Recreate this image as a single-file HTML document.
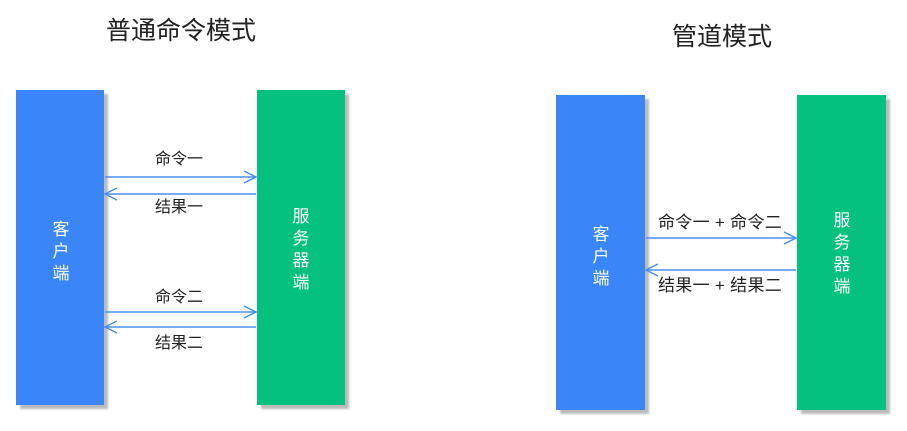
<!DOCTYPE html>
<html><head><meta charset="utf-8"><style>
body{margin:0;width:907px;height:431px;background:#fff;position:relative;overflow:hidden;font-family:"Liberation Sans","Noto Sans CJK SC",sans-serif;}
.t{position:absolute;color:#222;white-space:nowrap;line-height:1;}
.box{position:absolute;box-shadow:4px 4px 2px #bbb;}
.b{background:#3a86f8}.g{background:#04c17f}
.v{position:absolute;color:#fff;font-size:17px;line-height:22px;width:20px;text-align:center;}
</style></head><body>
<div class="t" style="left:106px;top:19px;font-size:25px;">普通命令模式</div>
<div class="t" style="left:672px;top:25px;font-size:25px;">管道模式</div>
<div class="box b" style="left:16px;top:90px;width:88px;height:315px"></div>
<div class="box g" style="left:257px;top:90px;width:88px;height:315px"></div>
<div class="box b" style="left:556px;top:95px;width:89px;height:315px"></div>
<div class="box g" style="left:797px;top:95px;width:89px;height:315px"></div>
<div class="v" style="left:51px;top:219px">客户端</div>
<div class="v" style="left:291px;top:206px">服务器端</div>
<div class="v" style="left:591px;top:224px">客户端</div>
<div class="v" style="left:832px;top:210px">服务器端</div>
<svg style="position:absolute;left:0;top:0" width="907" height="431">
<g stroke="#4a8ef0" stroke-width="1.5" fill="none">
<line x1="105" y1="177" x2="256" y2="177"/><polyline points="244,171 256,177 244,183"/>
<line x1="105" y1="194" x2="256" y2="194"/><polyline points="117,188 105,194 117,200"/>
<line x1="105" y1="312" x2="256" y2="312"/><polyline points="244,306 256,312 244,318"/>
<line x1="105" y1="327" x2="256" y2="327"/><polyline points="117,321 105,327 117,333"/>
<line x1="646" y1="238" x2="796" y2="238"/><polyline points="784,232 796,238 784,244"/>
<line x1="646" y1="270" x2="796" y2="270"/><polyline points="658,264 646,270 658,276"/>
</g></svg>
<div class="t" style="left:155px;top:152px;font-size:16px;">命令一</div>
<div class="t" style="left:155px;top:200px;font-size:16px;">结果一</div>
<div class="t" style="left:155px;top:290px;font-size:16px;">命令二</div>
<div class="t" style="left:155px;top:336px;font-size:16px;">结果二</div>
<div class="t" style="left:658px;top:214px;font-size:17px;letter-spacing:0.3px;">命令一 + 命令二</div>
<div class="t" style="left:658px;top:277px;font-size:17px;letter-spacing:0.3px;">结果一 + 结果二</div>
</body></html>
